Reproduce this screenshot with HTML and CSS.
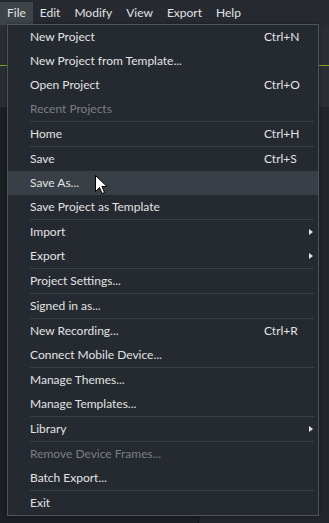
FILE: index.html
```
<!DOCTYPE html>
<html>
<head>
    <title>File menu</title>
    <link rel="stylesheet" href="styles.css">
</head>
<body>
    <div class="menubar">
        <span class="menubar-item active">File</span>
        <span class="menubar-item">Edit</span>
        <span class="menubar-item">Modify</span>
        <span class="menubar-item">View</span>
        <span class="menubar-item">Export</span>
        <span class="menubar-item">Help</span>
    </div>

    <div class="workspace">
        <div class="panel-top"></div>
        <div class="panel-bottom"></div>
    </div>

    <!-- dropdown for the File menu -->
    <div class="dropdown">
        <div class="item"><span>New Project</span><span class="key">Ctrl+N</span></div>
        <div class="item"><span>New Project from Template...</span></div>
        <div class="item"><span>Open Project</span><span class="key">Ctrl+O</span></div>
        <div class="item disabled"><span>Recent Projects</span></div>
        <div class="sep"></div>
        <div class="item"><span>Home</span><span class="key">Ctrl+H</span></div>
        <div class="sep"></div>
        <div class="item"><span>Save</span><span class="key">Ctrl+S</span></div>
        <div class="item hover"><span>Save As...</span></div>
        <div class="item"><span>Save Project as Template</span></div>
        <div class="sep"></div>
        <div class="item sub"><span>Import</span></div>
        <div class="item sub"><span>Export</span></div>
        <div class="sep"></div>
        <div class="item"><span>Project Settings...</span></div>
        <div class="sep"></div>
        <div class="item"><span>Signed in as...</span></div>
        <div class="sep"></div>
        <div class="item"><span>New Recording...</span><span class="key">Ctrl+R</span></div>
        <div class="item"><span>Connect Mobile Device...</span></div>
        <div class="sep"></div>
        <div class="item"><span>Manage Themes...</span></div>
        <div class="item"><span>Manage Templates...</span></div>
        <div class="sep"></div>
        <div class="item sub"><span>Library</span></div>
        <div class="sep"></div>
        <div class="item disabled"><span>Remove Device Frames...</span></div>
        <div class="item"><span>Batch Export...</span></div>
        <div class="sep"></div>
        <div class="item"><span>Exit</span></div>
    </div>

    <svg class="cursor" width="13" height="20" viewBox="0 0 13 20">
        <path d="M0.5 0.5 L0.5 16.5 L4.5 12.5 L7 18.5 L9.5 17.5 L7 11.5 L12 11.5 Z" fill="#fff" stroke="#000" stroke-width="1"/>
    </svg>
</body>
</html>
```

FILE: styles.css
```
body {
    margin: 0;
    padding: 0;
    width: 329px;
    height: 523px;
    overflow: hidden;
    background-color: #1f2226;
    font-family: Lato, "Open Sans", sans-serif;
    font-size: 12px;
    color: #e2e3e4;
    position: relative;
}

.menubar {
    display: flex;
    height: 25px;
    padding-top: 2px;
    box-sizing: border-box;
    background-color: #262a30;
}

.menubar-item {
    padding: 0 7px 1px;
    line-height: 22px;
}

.menubar-item.active {
    background-color: #3d4549;
}

.workspace {
    height: 498px;
    display: flex;
    flex-direction: column;
}

.panel-top {
    height: 82px;
    background-color: #2a2e34;
    background-image: linear-gradient(#2a2e34 40px, #7fa321 40px, #7fa321 41px, #2a2e34 41px);
}

.panel-bottom {
    flex: 1;
    background-color: #1c1f23;
    background-image: linear-gradient(90deg, #1c1f23 198px, #0f1113 198px, #0f1113 199px, #22262b 199px);
}

.dropdown {
    position: absolute;
    left: 7px;
    top: 24px;
    width: 310px;
    border: 1px solid #4e5559;
    background-color: #252930;
    box-shadow: 0 0 3px rgba(0, 0, 0, 0.4);
}

.item {
    display: flex;
    align-items: center;
    height: 24px;
    padding: 0 23px 1px 22px;
    box-sizing: border-box;
    position: relative;
}

.item .key {
    margin-left: auto;
    width: 31px;
}

.item.disabled {
    color: #7b7f85;
}

.item.hover {
    background-color: #393f46;
}

.item.sub::after {
    content: "";
    position: absolute;
    right: 5px;
    top: 9px;
    border-left: 4px solid #e2e3e4;
    border-top: 3px solid transparent;
    border-bottom: 3px solid transparent;
}

.sep {
    height: 1px;
    margin: 0 4px 0 22px;
    background-color: #3a3f45;
}

.cursor {
    position: absolute;
    left: 95px;
    top: 175px;
}
```
